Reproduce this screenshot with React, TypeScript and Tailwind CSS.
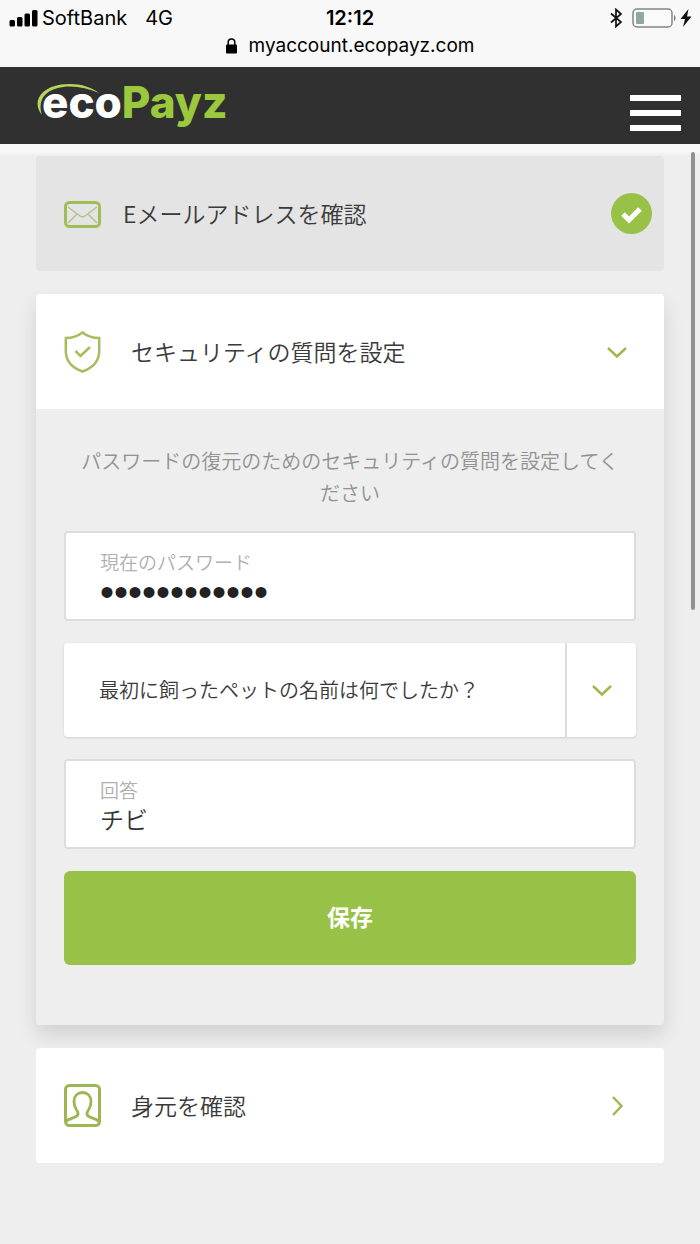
import { useState } from "react";
import type { ReactNode } from "react";

const questions = ["最初に飼ったペットの名前は何でしたか？"];

function StatusBar() {
  return (
    <div className="h-[67px] bg-[#f8f8f8] font-['Inter',sans-serif] text-black">
      <div className="grid h-9 grid-cols-3 items-center pl-2 pr-2">
        <div className="flex items-center gap-1 text-[20px]">
          <svg width="30" height="18" viewBox="0 0 30 18" aria-hidden="true">
            <rect x="1.500" y="11" width="5.500" height="6.500" rx="1.500" />
            <rect x="9" y="8" width="5.500" height="9.500" rx="1.500" />
            <rect x="16.500" y="4.500" width="5.500" height="13" rx="1.500" />
            <rect x="24" y="1" width="5.500" height="16.500" rx="1.500" />
          </svg>
          <span>SoftBank</span>
          <span className="ml-3.5">4G</span>
        </div>
        <div className="text-center text-[20px] font-semibold">12:12</div>
        <div className="flex items-center justify-end gap-2">
          <svg width="14" height="20" viewBox="0 0 14 20" fill="none" stroke="#111" strokeWidth="1.700" aria-hidden="true">
            <path d="M2 5.500 12 14 7 18.500V1.500L12 6 2 14.500" />
          </svg>
          <div className="flex items-center gap-1">
            <svg width="45" height="20" viewBox="0 0 45 20" aria-hidden="true">
              <rect x="2" y="1" width="39" height="18" rx="4" fill="#fbfbfb" stroke="#858585" strokeWidth="1.500" />
              <rect x="5" y="4" width="8" height="12" rx="1" fill="#8fa99b" />
              <path d="M43 7c2 1 2 5 0 6z" fill="#777" />
            </svg>
            <svg width="12" height="18" viewBox="0 0 12 18" aria-hidden="true">
              <path d="M8.500 0 0.500 10h4.500L3 18l8.500-10.500H7z" fill="#111" />
            </svg>
          </div>
        </div>
      </div>
      <div className="flex h-5 items-center justify-center gap-3 text-[19px]">
        <svg width="11" height="16" viewBox="0 0 11 16" aria-hidden="true">
          <rect y="6.500" width="11" height="9" rx="1" />
          <path d="M2.200 7V4.300a3.300 3.300 0 0 1 6.600 0V7" fill="none" stroke="#000" strokeWidth="1.500" />
        </svg>
        <span>myaccount.ecopayz.com</span>
      </div>
    </div>
  );
}

function Logo() {
  return (
    <a href="#" className="relative block pb-2 pl-1.5 font-['Inter',sans-serif] text-[44px] leading-[50px] font-extrabold" aria-label="ecoPayz">
      <span className="text-white">eco</span>
      <span className="text-[#9bc83c]">Payz</span>
      <svg className="absolute top-1.5 left-0" width="66" height="36" viewBox="0 0 66 36" aria-hidden="true">
        <path d="M6 32C-4 20 3 5 25 1.500 41-.5 54 3 63 10 51 5 39 2.500 27 4 9 6.500 1 17 6 32z" fill="#b7d45b" />
      </svg>
    </a>
  );
}

function EnvelopeIcon() {
  return (
    <svg width="37" height="28" viewBox="0 0 37 28" fill="none" aria-hidden="true">
      <rect x="1.500" y="2.500" width="34" height="24" rx="4" stroke="#a2bd57" strokeWidth="3" />
      <path d="M4 7 16 16q2.500 2 5 0L33 7M4 23l9-9M33 23l-9-9" stroke="#b5c48b" strokeWidth="1.500" />
    </svg>
  );
}

function ShieldIcon() {
  return (
    <svg width="37" height="42" viewBox="0 0 37 42" fill="none" stroke="#a5bd5e" strokeWidth="2.500" aria-hidden="true">
      <path d="M18.500 1.500C14 5 8 7 1.800 7v13c0 10 7 17 16.700 20.500C28.200 37 35.200 30 35.200 20V7C29 7 23 5 18.500 1.500z" />
      <path d="m11.500 20 5 5L26 16" />
    </svg>
  );
}

function PersonIcon() {
  return (
    <svg width="37" height="43" viewBox="0 0 37 43" fill="none" stroke="#9db553" aria-hidden="true">
      <rect x="1.500" y="1.500" width="34" height="40" rx="4" strokeWidth="3" />
      <path d="M2 37.500c3-3.500 11-3.500 12-7 .5-2-.5-3.500-2-5.500-1.500-2.500-2-5-2-8 0-5 3.500-8.500 8.500-8.500S27 12 27 17c0 3-.5 5.500-2 8-1.500 2-2.500 3.500-2 5.500 1 3.500 9 3.500 12 7" strokeWidth="2.800" />
    </svg>
  );
}

function Chevron({ right }: { right?: boolean }) {
  return (
    <svg width="22" height="22" viewBox="0 0 22 22" fill="none" stroke="#a0b84f" strokeWidth="2.500" aria-hidden="true">
      <path d={right ? "m7 2 8.500 9L7 20" : "m2 7 9 8.500L20 7"} />
    </svg>
  );
}

function StepRow({ icon, title, right, wide }: { icon: ReactNode; title: string; right: ReactNode; wide?: boolean }) {
  return (
    <button type="button" className={`flex h-[115px] w-full items-center pl-7 text-left text-[23px] font-[350] text-[#3a3a3a] ${wide ? "gap-[22px] pr-3" : "gap-[30px] pr-9"}`}>
      {icon}
      <span className="flex-1">{title}</span>
      {right}
    </button>
  );
}

export default function App() {
  const [password, setPassword] = useState("abcdefghijkl");
  const [answer, setAnswer] = useState("チビ");

  return (
    <div className="relative min-h-screen bg-[#eeeeee] font-['Noto_Sans_CJK_JP',sans-serif]">
      <StatusBar />

      <header className="flex h-[77px] items-center justify-between bg-[#303030] pr-[19px] pl-9">
        <Logo />
        <button type="button" className="flex w-[51px] flex-col gap-[9px] pt-3.5" aria-label="メニュー">
          <span className="h-1.5 bg-white" />
          <span className="h-1.5 bg-white" />
          <span className="h-1.5 bg-white" />
        </button>
      </header>

      <div className="h-3 bg-gradient-to-b from-[#f8f8f8] from-60% to-[#eeeeee]" />

      {/* overlay scroll indicator */}
      <div className="absolute top-[152px] right-[5px] h-[458px] w-1 rounded-full bg-[#909090]" />

      <main className="flex flex-col gap-[23px] px-9 pb-[78px]">
        <section className="rounded-sm bg-[#e4e4e4]">
          <StepRow
            wide
            icon={<EnvelopeIcon />}
            title="Eメールアドレスを確認"
            right={
              <svg width="41" height="41" viewBox="0 0 41 41" aria-hidden="true">
                <circle cx="20.500" cy="20.500" r="20.500" fill="#98c247" />
                <path d="m12 21 6 6 11-11" fill="none" stroke="#fff" strokeWidth="5" />
              </svg>
            }
          />
        </section>

        <section className="rounded-sm bg-[#eeeeee] shadow-[0_10px_20px_rgba(0,0,0,0.12)]">
          <div className="rounded-t-sm bg-white">
            <StepRow icon={<ShieldIcon />} title="セキュリティの質問を設定" right={<Chevron />} />
          </div>
          <form className="flex flex-col gap-[22px] px-7 pt-9 pb-[60px]" onSubmit={(e) => e.preventDefault()}>
            <p className="px-4 text-center text-[20px] leading-8 font-[350] text-[#929292]">
              パスワードの復元のためのセキュリティの質問を設定してください
            </p>

            <div className="flex h-[90px] flex-col rounded-sm border-2 border-[#dddddd] bg-white px-[34px] pt-[17px]">
              <label htmlFor="password" className="text-[19px] leading-6 font-[350] text-[#b0b0b0]">現在のパスワード</label>
              <input
                id="password"
                type="password"
                value={password}
                onChange={(e) => setPassword(e.target.value)}
                className="h-9 w-full bg-transparent font-['Liberation_Sans',sans-serif] text-[40px] leading-9 text-[#222] outline-none"
              />
            </div>

            <div className="relative h-[94px] rounded-sm bg-white shadow-sm">
              <select aria-label="質問" className="h-full w-full appearance-none bg-transparent pr-20 pl-[35px] text-[20px] font-[350] text-[#3a3a3a] outline-none">
                {questions.map((q) => (
                  <option key={q}>{q}</option>
                ))}
              </select>
              <span className="pointer-events-none absolute inset-y-0 right-0 flex w-[71px] items-center justify-center border-l-2 border-[#dddddd]">
                <Chevron />
              </span>
            </div>

            <div className="flex h-[90px] flex-col rounded-sm border-2 border-[#dddddd] bg-white px-[34px] pt-[17px]">
              <label htmlFor="answer" className="text-[19px] leading-6 font-[350] text-[#b0b0b0]">回答</label>
              <input
                id="answer"
                type="text"
                value={answer}
                onChange={(e) => setAnswer(e.target.value)}
                className="h-9 w-full bg-transparent pb-1 text-[24px] leading-8 font-[350] text-[#333] outline-none"
              />
            </div>

            <button type="submit" className="h-[94px] rounded-md bg-[#98c247] pb-1 text-[23px] font-bold text-white">保存</button>
          </form>
        </section>

        <section className="relative rounded-sm bg-white">
          <StepRow icon={<PersonIcon />} title="身元を確認" right={<Chevron right />} />
        </section>
      </main>
    </div>
  );
}
